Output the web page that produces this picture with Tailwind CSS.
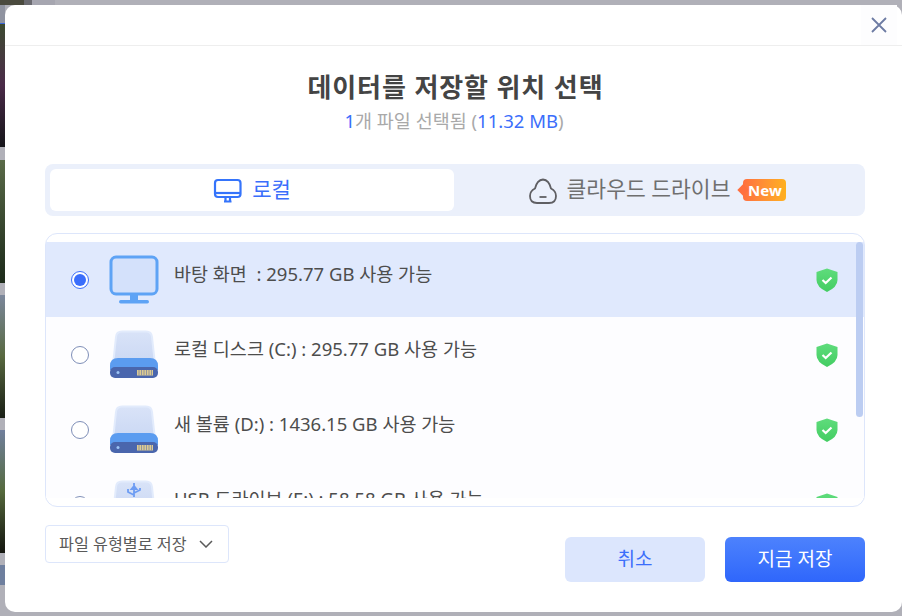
<!DOCTYPE html>
<html lang="ko">
  <head>
    <meta charset="UTF-8" />
    <title>데이터를 저장할 위치 선택</title>
    <script src="https://cdn.jsdelivr.net/npm/@tailwindcss/browser@4"></script>
  </head>
  <body class="overflow-hidden">
    <svg width="0" height="0" class="absolute">
      <defs>
        <linearGradient id="driveTop" x1="0" y1="0" x2="0" y2="1">
          <stop offset="0" stop-color="#d9e3f8" />
          <stop offset="1" stop-color="#ccd9f4" />
        </linearGradient>
        <linearGradient id="shieldFill" x1="0" y1="0" x2="0" y2="1">
          <stop offset="0" stop-color="#5fdc7c" />
          <stop offset="1" stop-color="#43cd62" />
        </linearGradient>
        <symbol id="drive" viewBox="0 0 50 50">
          <path d="M4.500 30 7 7Q7.500 1.500 13 1.500H37Q42.500 1.500 43 7L45.500 30Z" fill="url(#driveTop)" stroke="#e2ebfc" stroke-width="2" />
          <path d="M1 36Q1 28 9 28H41Q49 28 49 36V40H1Z" fill="#5b9cf0" />
          <rect x="1" y="37" width="48" height="11" rx="5" fill="#4a66ad" />
          <circle cx="9" cy="42.500" r="1.500" fill="#9cc4f5" />
          <rect x="28" y="40" width="16" height="5.500" fill="#dccb92" />
          <path d="M30 40v5.500M32.500 40v5.500M35 40v5.500M37.500 40v5.500M40 40v5.500M42.500 40v5.500" stroke="#7f86a0" stroke-width=".8" />
        </symbol>
        <symbol id="shield" viewBox="0 0 22 24">
          <path d="M11 .5 21.500 4V12Q21.500 19 11 24 .5 19 .5 12V4Z" fill="url(#shieldFill)" />
          <path d="M6.500 12 9.700 15 15.500 9.500" fill="none" stroke="#fff" stroke-width="2.200" />
        </symbol>
      </defs>
    </svg>

    <div class="relative w-[902px] h-[616px] bg-[#b0b0b8] font-['Noto_Sans','Noto_Sans_CJK_KR',sans-serif]">
      <!-- what shows behind the dialog -->
      <div class="flex h-[5px]">
        <div class="w-[24px] bg-[#4a4a3e]"></div>
        <div class="w-[8px] bg-[#6a6a70]"></div>
        <div class="w-[23px] bg-[#a6a6b0]"></div>
      </div>
      <div class="flex flex-col w-[5px]">
        <div class="h-[19px] bg-[#8f93a0] border-b border-[#3b66d8]"></div>
        <div class="h-[123px] bg-gradient-to-b from-[#3c4a30] via-[#4a2a48] to-[#15151a]"></div>
        <div class="h-[13px] bg-[#b0b0b8]"></div>
        <div class="h-[123px] bg-gradient-to-b from-[#5a6a48] to-[#1c2a1a]"></div>
        <div class="h-[12px] bg-[#b0b0b8]"></div>
        <div class="h-[123px] bg-gradient-to-b from-[#7c879c] via-[#58683f] to-[#1a2016]"></div>
        <div class="h-[12px] bg-[#b0b0b8]"></div>
        <div class="h-[123px] bg-gradient-to-b from-[#717f9c] via-[#55693c] to-[#14160f]"></div>
        <div class="h-[12px] bg-[#b0b0b8]"></div>
        <div class="h-[20px] bg-[#6e7f9e]"></div>
      </div>

      <!-- dialog -->
      <div class="absolute left-[5px] top-[5px] w-[897px] h-[607px] bg-white rounded-[10px] flex flex-col">
        <div class="h-[41px] shrink-0 border-b border-[#eeeeee] flex justify-end items-start">
          <button class="w-[36px] h-[40px] flex items-center justify-center bg-[#fdfdfe] mr-[5px]">
            <svg width="18" height="18" viewBox="0 0 18 18" fill="none" stroke="#6d7ba3" stroke-width="1.800">
              <path d="M2 2 16 16M16 2 2 16" />
            </svg>
          </button>
        </div>

        <h1 class="mt-[23px] pl-[4px] text-center text-[26px] leading-[36px] font-bold text-[#444444] tracking-[0.9px]">데이터를 저장할 위치 선택</h1>
        <p class="mt-[4px] pl-[1px] text-center text-[18.500px] leading-[24px] text-[#a9a9a9]">
          <span class="text-[#3b6efb]">1</span>개 파일 선택됨 (<span class="text-[#3b6efb]">11.32 MB</span>)
        </p>

        <!-- tabs -->
        <div class="mt-[31px] mx-[40px] w-[820px] h-[52px] bg-[#ebf0fb] rounded-[8px] p-[5px] flex">
          <div class="w-[404px] bg-white rounded-[6px] flex items-center justify-center gap-[9px] text-[#3b6efb] text-[21px] pb-[1px]">
            <svg width="30" height="26" viewBox="0 0 30 26" fill="none" stroke="#3574fb" stroke-width="2.200" class="mt-[3px]">
              <rect x="2" y="2" width="25.500" height="17" rx="3" />
              <path d="M2 15H27.500" />
              <path d="M11 23.500H18.500M12.500 20V23M17 20V23" />
            </svg>
            <span>로컬</span>
          </div>
          <div class="flex-1 flex items-center justify-center gap-[9px] text-[#6f6f6f] text-[21.500px] pb-[1px]">
            <svg width="30" height="28" viewBox="0 0 30 28" fill="none" stroke="#5f5f63" stroke-width="1.800" class="mt-[2px]">
              <path d="M9 26Q2 26 2 19 2 14 7 11.500 9 3 15 2.500 21 3 23 11.500 28 14 28 19 28 26 21 26Z" />
              <path d="M11.500 20H18.500" />
            </svg>
            <span>클라우드 드라이브</span>
            <span class="relative h-[22px] w-[43px] ml-[4px] rounded-[4px] bg-gradient-to-r from-[#ff6f3f] to-[#ffb01c] text-white text-[15px] font-bold leading-[22px] text-center">
              <span class="absolute left-[-4px] top-[7px] w-[8px] h-[8px] rotate-45 bg-[#ff6f3f]"></span>
              <span class="relative">New</span>
            </span>
          </div>
        </div>

        <!-- drive list -->
        <div class="relative mt-[17px] mx-[40px] w-[820px] h-[274px] border border-[#dde6fb] rounded-[12px] py-[8px]">
          <div class="h-[256px] overflow-hidden text-[18.500px] text-[#4d4d4d]">
            <div class="h-[75px] bg-[#e0e9fd] flex items-center">
              <span class="ml-[25px] w-[18px] h-[18px] rounded-full border border-[#3b6efb] bg-white flex items-center justify-center">
                <span class="w-[12px] h-[12px] rounded-full bg-[#3b6efb]"></span>
              </span>
              <svg width="50" height="50" viewBox="0 0 50 50" fill="none" class="ml-[20px]">
                <rect x="2" y="2" width="46" height="37" rx="5" fill="#d4e1fb" stroke="#5ea3f5" stroke-width="3" />
                <path d="M21 39.500H29V46H21Z" fill="#5ea3f5" />
                <rect x="10" y="45" width="30" height="3.500" rx="1.700" fill="#5ea3f5" />
              </svg>
              <span class="ml-[15px] pb-[11px] whitespace-pre">바탕 화면  : 295.77 GB 사용 가능</span>
              <svg width="22" height="24" class="ml-auto mr-[26px]"><use href="#shield" /></svg>
            </div>
            <div class="h-[75px] bg-[#fdfdff] flex items-center">
              <span class="ml-[25px] w-[18px] h-[18px] rounded-full border border-[#7f8fb8] bg-white"></span>
              <svg width="50" height="50" class="ml-[20px]"><use href="#drive" /></svg>
              <span class="ml-[15px] pb-[11px]">로컬 디스크 (C:) : 295.77 GB 사용 가능</span>
              <svg width="22" height="24" class="ml-auto mr-[26px]"><use href="#shield" /></svg>
            </div>
            <div class="h-[75px] bg-[#fdfdff] flex items-center">
              <span class="ml-[25px] w-[18px] h-[18px] rounded-full border border-[#7f8fb8] bg-white"></span>
              <svg width="50" height="50" class="ml-[20px]"><use href="#drive" /></svg>
              <span class="ml-[15px] pb-[11px]">새 볼륨 (D:) : 1436.15 GB 사용 가능</span>
              <svg width="22" height="24" class="ml-auto mr-[26px]"><use href="#shield" /></svg>
            </div>
            <div class="h-[75px] bg-[#fdfdff] flex items-center">
              <span class="ml-[25px] w-[18px] h-[18px] rounded-full border border-[#7f8fb8] bg-white"></span>
              <svg width="50" height="50" viewBox="0 0 50 50" class="ml-[20px]">
                <path d="M4.500 30 7 7Q7.500 1.500 13 1.500H37Q42.500 1.500 43 7L45.500 30Z" fill="url(#driveTop)" stroke="#e2ebfc" stroke-width="2" />
                <path d="M25 3V17M25 6 22.500 9H27.500ZM25 15 19 12V9M25 13 31 10V8" fill="none" stroke="#6d9cf3" stroke-width="1.800" />
              </svg>
              <span class="ml-[15px] pb-[11px]">USB 드라이브 (E:) : 58.58 GB 사용 가능</span>
              <svg width="22" height="24" class="ml-auto mr-[26px]"><use href="#shield" /></svg>
            </div>
          </div>
          <div class="absolute right-[1px] top-[8px] w-[7px] h-[175px] rounded-full bg-[#bccdf2]"></div>
        </div>

        <!-- footer -->
        <div class="mt-[18px] mx-[40px] w-[820px] flex items-start justify-between">
          <div class="w-[184px] h-[38px] border border-[#dde6fb] rounded-[4px] flex items-center pl-[13px] text-[16.200px] text-[#5a5a5a]">
            <span>파일 유형별로 저장</span>
            <svg width="14" height="8" viewBox="0 0 14 8" fill="none" stroke="#5a5a5a" stroke-width="1.500" class="ml-[12px]">
              <path d="M1 1 7 7 13 1" />
            </svg>
          </div>
          <div class="flex gap-[20px] mt-[12px]">
            <button class="w-[140px] h-[45px] rounded-[6px] bg-[#dce6fd] text-[#3b6efb] text-[19px]">취소</button>
            <button class="w-[140px] h-[45px] rounded-[6px] bg-gradient-to-b from-[#4d82fd] to-[#2f66fb] text-white text-[19px]">지금 저장</button>
          </div>
        </div>
      </div>
    </div>
  </body>
</html>
